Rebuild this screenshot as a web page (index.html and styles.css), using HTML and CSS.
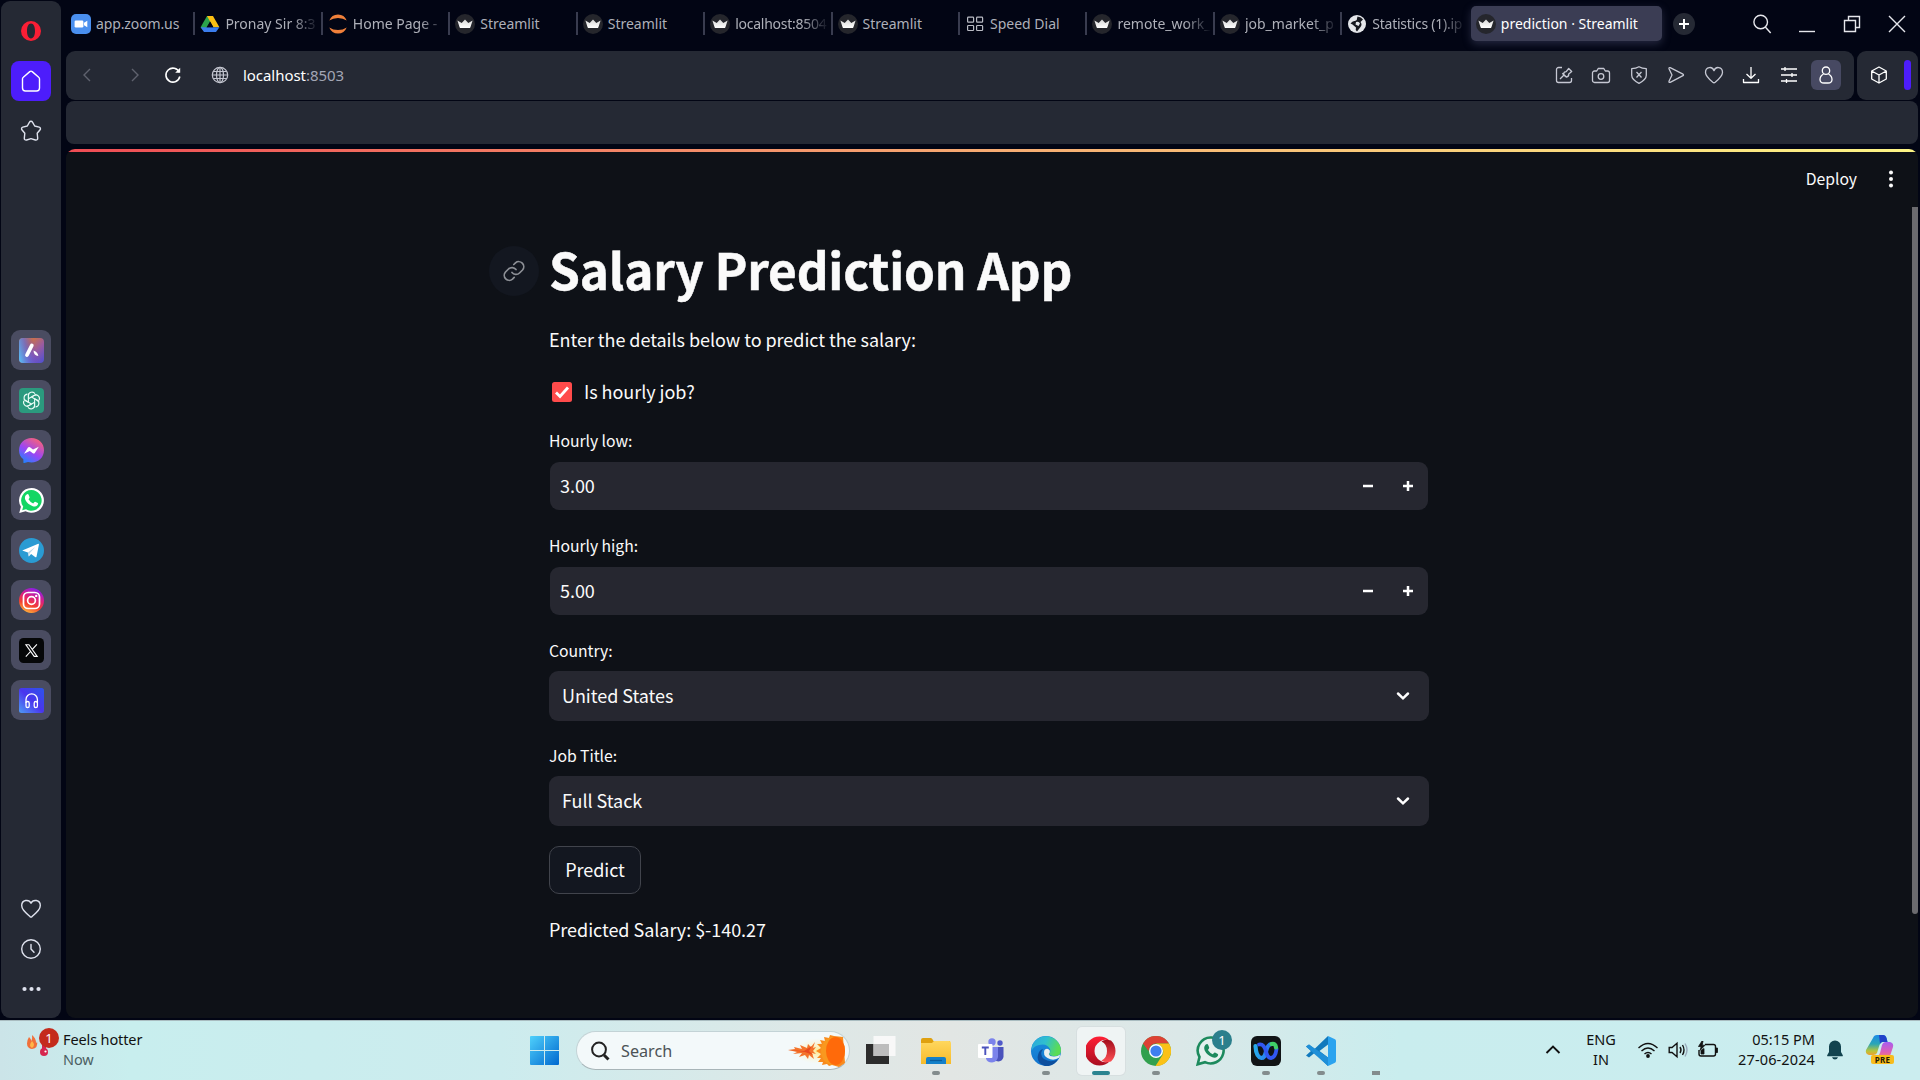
FILE: index.html
```html
<!DOCTYPE html>
<html lang="en">
<head>
<meta charset="utf-8">
<title>prediction · Streamlit</title>
<link rel="stylesheet" href="styles.css">
</head>
<body>
<svg class="defs" width="0" height="0">
  <defs>
    <linearGradient id="gA" x1="0" y1="0" x2="1" y2="1"><stop offset="0" stop-color="#d2874f"/><stop offset=".3" stop-color="#c8704f"/><stop offset=".6" stop-color="#9a5ba0"/><stop offset="1" stop-color="#4b4fd6"/></linearGradient>
    <linearGradient id="gA2" x1="0" y1=".7" x2=".7" y2=".5"><stop offset="0" stop-color="#5cb4ee"/><stop offset=".5" stop-color="#5a6be0" stop-opacity=".7"/><stop offset="1" stop-color="#5a3cd8" stop-opacity="0"/></linearGradient>
    <linearGradient id="gMes" x1=".2" y1="1" x2=".8" y2="0"><stop offset="0" stop-color="#1b86ff"/><stop offset=".45" stop-color="#9b45f5"/><stop offset="1" stop-color="#ff6470"/></linearGradient>
    <linearGradient id="gIns" x1=".2" y1="1" x2=".6" y2="0"><stop offset="0" stop-color="#ffc53d"/><stop offset=".35" stop-color="#f4412f"/><stop offset=".65" stop-color="#dd2080"/><stop offset="1" stop-color="#8a1fe8"/></linearGradient>
    <linearGradient id="gHead" x1="0" y1="1" x2="1" y2="0"><stop offset="0" stop-color="#4f9df5"/><stop offset=".5" stop-color="#4a35ee"/><stop offset="1" stop-color="#2c55ea"/></linearGradient>
    <linearGradient id="gWin" x1="0" y1="0" x2="1" y2="1"><stop offset="0" stop-color="#4fd0fb"/><stop offset="1" stop-color="#0068cf"/></linearGradient>
    <linearGradient id="gFold" x1="0" y1="0" x2="0" y2="1"><stop offset="0" stop-color="#ffd75e"/><stop offset="1" stop-color="#f7bb2a"/></linearGradient>
    <linearGradient id="gEdge" x1="0" y1="0" x2="1" y2=".3"><stop offset="0" stop-color="#2da7dc"/><stop offset=".5" stop-color="#2fbfd0"/><stop offset="1" stop-color="#5bdc55"/></linearGradient>
    <linearGradient id="gEdge2" x1="0" y1="0" x2="0" y2="1"><stop offset="0" stop-color="#1b93dd"/><stop offset="1" stop-color="#1273cf"/></linearGradient>
    <linearGradient id="gOp" x1="0" y1="0" x2="0" y2="1"><stop offset="0" stop-color="#ff1f35"/><stop offset="1" stop-color="#a90e20"/></linearGradient>
    <linearGradient id="gOp2" x1="0" y1="0" x2="0" y2="1"><stop offset="0" stop-color="#a30d1c"/><stop offset="1" stop-color="#ff5155"/></linearGradient>
    <linearGradient id="gCop" x1="0" y1="0" x2="0" y2="1"><stop offset="0" stop-color="#1b8be8"/><stop offset=".45" stop-color="#2ba6b5"/><stop offset=".8" stop-color="#b8c63a"/><stop offset="1" stop-color="#f0a030"/></linearGradient>
    <linearGradient id="gCop2" x1="0" y1="0" x2="0" y2="1"><stop offset="0" stop-color="#a75df0"/><stop offset=".6" stop-color="#e05fb4"/><stop offset="1" stop-color="#f58a5c"/></linearGradient>
    <linearGradient id="gWb" x1="0" y1="0" x2="1" y2="0"><stop offset="0" stop-color="#27a9ea"/><stop offset="1" stop-color="#2a6cf5"/></linearGradient>
    <radialGradient id="gGlow"><stop offset="0" stop-color="#ffe98a"/><stop offset="1" stop-color="#fff6cf" stop-opacity="0"/></radialGradient>
    <linearGradient id="gCrown" x1="0" y1="0" x2="0" y2="1"><stop offset="0" stop-color="#d8d8d8"/><stop offset="1" stop-color="#fff"/></linearGradient>
    <symbol id="crown" viewBox="0 0 20 20"><circle cx="10" cy="10" r="10" fill="#25262c"/><path d="M2.400 6.600l4.300 2.300L10 5.400l3.300 3.500 4.300-2.300-2.200 6.600q-.3.900-1.200.9H5.800q-.9 0-1.200-.9z" fill="url(#gCrown)"/></symbol>
  </defs>
</svg>

<div class="browser">
  <aside class="side">
    <svg class="opera-menu" width="22" height="22" viewBox="0 0 22 22"><path fill="#fa1e35" fill-rule="evenodd" d="M11 1a10 10 0 0 0 0 20 10 10 0 0 0 0-20zM11 3.600c2.700 0 4 3.400 4 7.400s-1.300 7.400-4 7.400-4-3.400-4-7.400 1.300-7.400 4-7.400z"/></svg>
    <span class="home"><svg width="24" height="24" viewBox="0 0 24 24" class="ln"><path d="M3.500 9.800a2 2 0 0 1 .8-1.600L10.800 2.600a2 2 0 0 1 2.400 0l6.500 5.600a2 2 0 0 1 .8 1.600V19a3 3 0 0 1-3 3h-11a3 3 0 0 1-3-3z"/></svg></span>
    <svg class="star ln" width="24" height="24" viewBox="0 0 24 24"><path d="M10.500 3.200a1.700 1.700 0 0 1 3 0l2.200 3.800 4.500 1.100a1.700 1.700 0 0 1 .9 2.700l-2.900 3.500.5 5a1.700 1.700 0 0 1-2.300 1.700L12 19.600l-4.400 1.400a1.700 1.700 0 0 1-2.300-1.700l.5-5-2.900-3.500a1.700 1.700 0 0 1 .9-2.700L8.300 7z"/></svg>
    <div class="apps">
      <span class="app"><svg width="25" height="25" viewBox="0 0 25 25"><rect width="25" height="25" rx="4" fill="url(#gA)"/><rect width="25" height="25" rx="4" fill="url(#gA2)"/><path d="M12.800 7.500L8 17" stroke="#fff" stroke-width="3.800" stroke-linecap="round"/><path d="M14.500 12.500q4.500 1.500 4.800 5.500-4.500-.3-4.800-5.500z" fill="#fff"/></svg></span>
      <span class="app"><svg width="25" height="25" viewBox="0 0 25 25"><rect width="25" height="25" rx="4" fill="#2b9a7e"/><g fill="none" stroke="#e9fbf5" stroke-width="1.100"><g id="pt"><path d="M9.400 14.300V7.800a3.600 3.600 0 0 1 6.600-2M12.500 9l3.200-1.900a3.600 3.600 0 0 1 1.600-.5"/></g><use href="#pt" transform="rotate(60 12.500 12.500)"/><use href="#pt" transform="rotate(120 12.500 12.500)"/><use href="#pt" transform="rotate(180 12.500 12.500)"/><use href="#pt" transform="rotate(240 12.500 12.500)"/><use href="#pt" transform="rotate(300 12.500 12.500)"/></g></svg></span>
      <span class="app"><svg width="25" height="25" viewBox="0 0 25 25"><path d="M12.500 0C19.500 0 25 5.200 25 12.200s-5.500 12.200-12.500 12.200c-1.200 0-2.400-.2-3.500-.5L4.500 25.200 4.300 21.300C1.500 19.100 0 16 0 12.200 0 5.200 5.500 0 12.500 0z" fill="url(#gMes)"/><path d="M5 15.800l4-6.200q.8-1 2-.3l3 2.200 5.800-2.700-4 6.200q-.8 1-2 .3l-3-2.200z" fill="#fff"/></svg></span>
      <span class="app"><svg width="25" height="25" viewBox="0 0 25 25"><path d="M12.500 0A12.400 12.400 0 1 1 6.600 23.300L.2 25l1.700-6.200A12.400 12.400 0 0 1 12.500 0z" fill="#fff"/><path d="M12.500 2.100A10.300 10.300 0 1 1 7 21.200L3.200 22.200l1-3.700A10.300 10.300 0 0 1 12.500 2.100z" fill="#12d664"/><path d="M7.300 6.800q1.800-1.500 2.400.2l.9 2.200q.2.700-1.100 2 1.700 3 4.700 4.200 1.400-2 2-1.700l2.600 1.300q.9.600-.4 2.300-1.800 1.900-4.600.9-5.300-1.900-7.400-6.200-1.300-3.200.9-5.200z" fill="#fff"/></svg></span>
      <span class="app"><svg width="25" height="25" viewBox="0 0 25 25"><circle cx="12.500" cy="12.500" r="12.500" fill="#2a9bd3"/><path d="M3.200 12.400L19.300 5.700q.8-.1.600 1l-2.400 12q-.4 1-1.400.4l-4-3-2.300 2.300-.9-4z" fill="#fff"/><path d="M8.900 14.400l7.400-5.400-5.600 6.300-.9 3.100z" fill="#b9d7e8"/></svg></span>
      <span class="app"><svg width="25" height="25" viewBox="0 0 25 25"><circle cx="12.500" cy="12.500" r="12.500" fill="url(#gIns)"/><g fill="none" stroke="#fff" stroke-width="1.700"><rect x="4.500" y="4.500" width="16" height="16" rx="4.600"/><circle cx="12.500" cy="12.500" r="3.900"/></g><circle cx="17.200" cy="7.900" r="1.200" fill="#fff"/></svg></span>
      <span class="app"><svg width="25" height="25" viewBox="0 0 25 25"><rect width="25" height="25" rx="4.500" fill="#060708"/><path d="M6.900 6.700h3l8.300 11.700h-3zM17.900 6.300l-4.800 5.400M11.500 13.500l-4.700 5.200" fill="none" stroke="#fff" stroke-width="1.100"/></svg></span>
      <span class="app"><svg width="25" height="25" viewBox="0 0 25 25"><rect width="25" height="25" rx="2.500" fill="url(#gHead)"/><g fill="none" stroke="#fff" stroke-width="1.300"><path d="M7 15v-3.500a5.500 5.500 0 0 1 11.400 0V15"/><rect x="7" y="13.500" width="3.200" height="6" rx="1.600"/><rect x="15.200" y="13.500" width="3.200" height="6" rx="1.600"/></g></svg></span>
    </div>
    <div class="side-foot">
      <svg width="24" height="24" viewBox="0 0 24 24" class="ln"><path d="M12 6.200C10 2 2.700 2.500 2.700 8.600c0 3.200 2.300 5.400 8.300 11q1 .8 2 0c6-5.600 8.300-7.800 8.300-11C21.300 2.500 14 2 12 6.200z"/></svg>
      <svg width="24" height="24" viewBox="0 0 24 24" class="ln"><circle cx="12" cy="12" r="9.300"/><path d="M12 7.500V12l3 3.300"/></svg>
      <svg width="24" height="24" viewBox="0 0 24 24" fill="#dfe2ee"><circle cx="5.500" cy="12" r="2.100"/><circle cx="12.500" cy="12" r="2.100"/><circle cx="19.500" cy="12" r="2.100"/></svg>
    </div>
  </aside>

  <div class="main">
    <header class="tabs">
      <div class="tab first"><svg width="20" height="20" viewBox="0 0 20 20"><rect width="20" height="20" rx="5" fill="#4a8fee"/><rect x="3.600" y="6.500" width="8.800" height="7" rx="1.300" fill="#fff"/><path d="M13 8.700l3.300-2v6.600l-3.300-2z" fill="#fff"/></svg><span class="tt">app.zoom.us</span></div>
      <div class="tab"><svg width="20" height="20" viewBox="0 0 20 20"><path d="M.6 13.200L7 2h3.200l2 3.500L4 17z" fill="#2ba24c"/><path d="M7 2h6l6.400 11.200h-6z" fill="#fbbf12"/><path d="M4 18l-3.400-4.800h18.800L16 18z" fill="#3b7ded"/><path d="M6.700 13.200L10 7.500l3.300 5.700z" fill="#020514"/></svg><span class="tt fade">Pronay Sir 8:3</span></div>
      <div class="tab"><svg width="20" height="20" viewBox="0 0 20 20"><path d="M1.300 6.500a9.300 9.300 0 0 1 17.400 0Q15 4 10 4t-8.700 2.500zM1.300 13.500a9.300 9.300 0 0 0 17.400 0Q15 16 10 16t-8.700-2.500z" fill="#f0803a"/></svg><span class="tt fade">Home Page -</span></div>
      <div class="tab"><svg width="20" height="20"><use href="#crown"/></svg><span class="tt">Streamlit</span></div>
      <div class="tab"><svg width="20" height="20"><use href="#crown"/></svg><span class="tt">Streamlit</span></div>
      <div class="tab"><svg width="20" height="20"><use href="#crown"/></svg><span class="tt fade tight">localhost:8504</span></div>
      <div class="tab"><svg width="20" height="20"><use href="#crown"/></svg><span class="tt">Streamlit</span></div>
      <div class="tab"><svg width="20" height="20" viewBox="0 0 20 20" fill="none" stroke="#b9bbc3" stroke-width="1.200"><rect x="2.600" y="3.200" width="6" height="5" rx=".8"/><rect x="11.600" y="3.200" width="6" height="5" rx=".8"/><rect x="2.600" y="11.500" width="6" height="5" rx=".8"/><rect x="11.600" y="11.500" width="6" height="5" rx=".8"/></svg><span class="tt">Speed Dial</span></div>
      <div class="tab"><svg width="20" height="20"><use href="#crown"/></svg><span class="tt fade">remote_work_</span></div>
      <div class="tab"><svg width="20" height="20"><use href="#crown"/></svg><span class="tt fade">job_market_p</span></div>
      <div class="tab"><svg width="20" height="20" viewBox="0 0 20 20"><circle cx="10" cy="10" r="9" fill="#e4e6ea"/><path d="M10.500 2.500q4 .5 5.500 3l-2.500 2.500q2 2.500 0 5l-3.500 4.500q-2-1.500-1-4l-3.500-3-2-1q2-3 4.500-2.500 2.500-1 2-2.500z" fill="#16181f"/><path d="M9 8q3-1 4 1.500l-1.500 2.500-3-1.500z" fill="#e4e6ea"/></svg><span class="tt fade tight">Statistics (1).ip</span></div>
      <div class="tab active"><svg width="20" height="20"><use href="#crown"/></svg><span class="tt">prediction · Streamlit</span></div>
      <span class="newtab"><svg width="12" height="12" viewBox="0 0 12 12"><path d="M6 1v10M1 6h10" stroke="#fff" stroke-width="2"/></svg></span>
      <div class="winctl">
        <svg width="20" height="20" viewBox="0 0 20 20"><circle cx="8.700" cy="8" r="6.800"/><path d="M13.300 13l5.400 6"/></svg>
        <svg width="20" height="20" viewBox="0 0 20 20"><path d="M2 17.500h16"/></svg>
        <svg width="20" height="20" viewBox="0 0 20 20"><path d="M2.500 6.500h11v11h-11zM6.500 6.500v-4h11v11h-4"/></svg>
        <svg width="20" height="20" viewBox="0 0 20 20"><path d="M2 2l16 16M18 2L2 18"/></svg>
      </div>
    </header>

    <div class="address">
      <div class="bar">
        <svg class="nav dim" width="20" height="20" viewBox="0 0 20 20"><path d="M13 4l-6 6 6 6"/></svg>
        <svg class="nav dim" width="20" height="20" viewBox="0 0 20 20"><path d="M7 4l6 6-6 6"/></svg>
        <svg class="nav reload" width="20" height="20" viewBox="0 0 20 20"><path d="M16.300 7.200a7 7 0 1 0 .5 4.300"/><path d="M17.200 2.800v5h-5z" fill="#fff" stroke="none"/></svg>
        <svg class="nav globe" width="20" height="20" viewBox="0 0 20 20"><circle cx="10" cy="10" r="7.700"/><ellipse cx="10" cy="10" rx="3.500" ry="7.700"/><path d="M10 2.300v15.400M3.200 6.500h13.600M3.200 13.500h13.600M2.300 10h15.400"/></svg>
        <span class="url"><b>localhost</b>:8503</span>
        <div class="tools">
          <svg width="20" height="20" viewBox="0 0 20 20"><path d="M8 2.500H4.500a2 2 0 0 0-2 2v11a2 2 0 0 0 2 2h11a2 2 0 0 0 2-2V13M6 14l4-4M8.300 8.300l3.400 3.500M9.500 9.300c.3-2 1-2.600 2.700-2.600l2.500-3.200 3 3-3 2.500c.3 2-.7 2.700-2.300 3z"/></svg>
          <svg width="20" height="20" viewBox="0 0 20 20"><path d="M3.500 6h2.200l1.500-2.500h5.600L14.300 6h2.200A2 2 0 0 1 18.500 8v7.500a2 2 0 0 1-2 2h-13a2 2 0 0 1-2-2V8a2 2 0 0 1 2-2z"/><circle cx="10" cy="11.500" r="2.800"/></svg>
          <svg width="20" height="20" viewBox="0 0 20 20"><path d="M10 1.700Q13 3.500 17.300 3.700v6.600c0 4-3.300 6-7.300 8-4-2-7.300-4-7.300-8V3.700Q7 3.500 10 1.700zM7.500 7l5 5.500M12.500 7l-5 5.500"/></svg>
          <svg width="20" height="20" viewBox="0 0 20 20"><path d="M3 3.700q-.3-1.500 1.200-1L17 9.200q1 .8 0 1.500L4.200 17.300q-1.500.5-1.200-1L6 10z"/></svg>
          <svg width="20" height="20" viewBox="0 0 20 20"><path d="M10 5.700C8.500 1 1.500 1.500 1.500 7.500c0 3.500 4 7 7.300 9.800q1.200.9 2.400 0c3.300-2.800 7.300-6.300 7.300-9.800C18.500 1.500 11.500 1 10 5.700z"/></svg>
          <svg width="20" height="20" viewBox="0 0 20 20"><path d="M10 2v11M5.500 9l4.500 4.300L14.500 9M2.500 14v3.500h15V14" stroke="#fff"/></svg>
          <svg width="20" height="20" viewBox="0 0 20 20"><path d="M2 4h16M2 10h16M2 16h16M6 2v4M13 8v4M7.500 14v4" stroke="#fff"/></svg>
          <span class="user"><svg width="20" height="20" viewBox="0 0 20 20"><circle cx="10" cy="5.700" r="3.700" stroke="#fff"/><path d="M7.500 9q-3.500 2-3.500 5.500 0 3.500 4 3.500h4q4 0 4-3.500 0-3.500-3.500-5.500" stroke="#fff"/></svg></span>
        </div>
      </div>
      <div class="ext"><svg width="20" height="20" viewBox="0 0 20 20"><path d="M10 2l7.300 4v8L10 18l-7.300-4V6zM2.700 6L10 10l7.300-4M10 10v8"/></svg><i></i></div>
    </div>

    <div class="bookmarks"></div>

    <div class="page">
      <div class="decor"></div>
      <div class="toolbar">Deploy<svg width="6" height="20" viewBox="0 0 6 20" fill="#fafafa"><circle cx="3" cy="3.400" r="2"/><circle cx="3" cy="10" r="2"/><circle cx="3" cy="16.600" r="2"/></svg></div>
      <div class="scroll"></div>
      <main class="form">
        <h1><span class="anchor"><svg width="24" height="24" viewBox="0 0 24 24"><path d="M10 13.500a5 5 0 0 0 7.500.5l3-3a5 5 0 0 0-7-7.100L11.800 5.500M14 10.500a5 5 0 0 0-7.500-.5l-3 3a5 5 0 0 0 7 7.100l1.700-1.700"/></svg></span>Salary Prediction App</h1>
        <p>Enter the details below to predict the salary:</p>
        <div class="check"><span class="box"><svg width="16" height="16" viewBox="0 0 16 16"><path d="M2 8.500l4 4L14 3.500" fill="none" stroke="#fff" stroke-width="2.800"/></svg></span><span class="tx">Is hourly job?</span></div>
        <label>Hourly low:</label>
        <div class="num"><span class="tx">3.00</span><svg width="50" height="10" viewBox="0 0 50 10"><path d="M0 5h10M40 5h10M45 0v10"/></svg></div>
        <label class="l2">Hourly high:</label>
        <div class="num"><span class="tx">5.00</span><svg width="50" height="10" viewBox="0 0 50 10"><path d="M0 5h10M40 5h10M45 0v10"/></svg></div>
        <label class="l3">Country:</label>
        <div class="select"><span class="tx">United States</span><svg width="14" height="10" viewBox="0 0 14 10"><path d="M2 2.500l5 4.800 5-4.800"/></svg></div>
        <label class="l4">Job Title:</label>
        <div class="select"><span class="tx">Full Stack</span><svg width="14" height="10" viewBox="0 0 14 10"><path d="M2 2.500l5 4.800 5-4.800"/></svg></div>
        <button>Predict</button>
        <p class="result">Predicted Salary: $-140.27</p>
      </main>
    </div>
  </div>
</div>

<footer class="taskbar">
  <div class="weather">
    <svg width="34" height="40" viewBox="0 0 34 40"><path d="M6 16q2 2 2.500 4Q9.500 17 9 14q4 3 4 8 1 0 1-2 1.500 7-5 8-5-.6-5-5.500Q4 19 6 16z" fill="#f0703a"/><path d="M9 20q4 4 0 7-4-2 0-7z" fill="#ffb648"/><rect x="19" y="12" width="4" height="18" rx="2" fill="#d6264e"/><circle cx="21" cy="31" r="4" fill="#d6264e"/><circle cx="22.500" cy="30.500" r="1.100" fill="#fff"/></svg>
    <span class="badge red">1</span>
    <div class="two left"><span>Feels hotter</span><em>Now</em></div>
  </div>
  <div class="dock">
    <svg class="start" width="29" height="29" viewBox="0 0 29 29"><path d="M0 1q0-1 1-1h13v14H0zM15 0h13q1 0 1 1v13H15zM0 15h14v14H1q-1 0-1-1zM15 15h14v13q0 1-1 1H15z" fill="url(#gWin)"/></svg>
    <div class="search"><svg width="20" height="20" viewBox="0 0 20 20"><circle cx="9" cy="8.500" r="6.900"/><path d="M14 14l4.500 4.500" stroke-width="3"/></svg>Search
      <svg class="fire" width="62" height="36" viewBox="0 0 62 36"><ellipse cx="32" cy="18" rx="24" ry="13" fill="url(#gGlow)"/><path d="M2 17l7-1-1-2 8 2-2-4 7 3 1-4 3 3 4-5-2 6 3-1-3 4 3 3-4-1 2 6-5-4-1 4-3-4-6 2 3-4-9 1 4-2z" fill="#f4732a"/><path d="M2 17l16 1 8-5-3 5 4 4-8-3z" fill="#e84a1e"/><path d="M32 10l4 1-2-4 5 1-1-4 5 1 1-3 4 1 9 1 2 26-6 4-7-2-3 1-2-2-5 1 1-3-5 0 3-4-4 0 4-4-5-3 5-3-4-4 6 0z" fill="#f98a1d"/><ellipse cx="47" cy="18" rx="12" ry="14" fill="#f9981f"/><ellipse cx="49.500" cy="18" rx="9.500" ry="14" fill="#ff6a0a"/></svg></div>
    <span class="task"><svg width="30" height="30" viewBox="0 0 30 30"><path d="M0 8h23v20H0z" fill="#2c2c2c"/><path d="M7.500 0h22v20h-22z" fill="#fafafa" fill-opacity=".92"/><path d="M7.500 8H23v12H7.500z" fill="#bdbdbd"/></svg></span>
    <span class="task run"><svg width="30" height="30" viewBox="0 0 30 30"><path d="M0 4q0-2 2-2h8q1 0 2.500 3H29v6H0z" fill="#dfa00f"/><path d="M0 7h11l2-2h15q2 0 2 2v21H0z" fill="url(#gFold)"/><path d="M5 28v-5q0-2 2-2h16q2 0 2 2v5z" fill="#1580c9"/><path d="M9 24.500h12" stroke="#0b5c9c" stroke-width="1.300"/></svg></span>
    <span class="task"><svg width="30" height="30" viewBox="0 0 30 30"><circle cx="16" cy="6" r="3.700" fill="#7b83eb"/><circle cx="24" cy="7" r="2.700" fill="#5059c9"/><path d="M20 11h7.500v10q-1 4-5 4.500-3 0-4-2z" fill="#4b53bc"/><path d="M10 11h12v10q-1 5-6 5.500-5 0-6-4z" fill="#7b83eb"/><rect x="2" y="8" width="14.500" height="14" rx="1" fill="#fff"/><path d="M5.800 11.500h7M9.300 11.500V19" stroke="#4b53bc" stroke-width="1.900"/></svg></span>
    <span class="task run"><svg width="30" height="30" viewBox="0 0 30 30"><circle cx="15" cy="15" r="15" fill="url(#gEdge2)"/><path d="M1 10A15 15 0 0 1 30 14q0 6-6 6-5 0-6-2 2-2 1-5-3-6-11-4-5 1-7 5z" fill="url(#gEdge)"/><path d="M12 13q-4 6 1 10 6 4 14 .5Q22 31 14 30 5 27 7 19q1-5 5-6z" fill="#0d4f9e"/><path d="M13.500 14q3-2.500 5.300.5.500 2-1 3.500.5 2.500 5.200 2.500 4 0 6-2l-.5 3q-6 4-12 .5-5-3-3-8z" fill="#e8f0f0"/></svg></span>
    <span class="task run cur"><svg width="30" height="30" viewBox="0 0 30 30"><path d="M15 .5A14.500 14.500 0 1 0 15 29.500q6 0 10-4-6 2-9.500-1Q10 21 10 15t5.500-9.500Q19 2.500 25 4.500 21 .5 15 .5z" fill="url(#gOp)" transform="translate(-1.500 0)"/><path d="M25 4.500A14.500 14.500 0 0 1 25 25.500q-6 2-9.500-1Q21 22 21 15t-5.500-9.500Q19 2.500 25 4.500z" fill="url(#gOp2)"/></svg></span>
    <span class="task run"><svg width="30" height="30" viewBox="0 0 30 30"><circle cx="15" cy="15" r="15" fill="#31a04e"/><path d="M2 7.500A15 15 0 0 1 28 7.500H15q-6 0-7.500 7.500z" fill="#dd4234"/><path d="M15 7.500h13A15 15 0 0 1 14.500 30l7-11q2-5-1.500-9z" fill="#fbc116"/><circle cx="15" cy="15" r="7" fill="#fff"/><circle cx="15" cy="15" r="5.600" fill="#3f7fee"/></svg></span>
    <span class="task"><svg width="30" height="30" viewBox="0 0 30 30"><path d="M15.500 1.500a13 13 0 1 1-6.500 24.700L1.700 28.300 3.500 21A13 13 0 0 1 15.500 1.500z" fill="#e5f1ee" stroke="#1d8a5d" stroke-width="2.600"/><path d="M9.500 8.800q2-1.500 2.700.3l1 2.500q.2.700-1.300 2.300 2 3 4.900 4.300 1.500-2 2.200-1.700l2.800 1.400q1 .6-.4 2.500-2 2-5 .9-5.500-2-7.700-6.700-1.300-3.600.8-5.800z" fill="#1d8a5d"/></svg><span class="badge teal">1</span></span>
    <span class="task run"><svg width="30" height="30" viewBox="0 0 30 30"><rect width="30" height="30" rx="6" fill="#111416"/><path d="M20.500 8q-4 .5-5.500 7.500-1.200 6.500-4.500 6.500Q5 21 4.500 10" fill="none" stroke="url(#gWb)" stroke-width="4.200" stroke-linecap="round"/><path d="M8 8.500q5-1 7 7 1.500 6.500 5 6.500 4.500-.5 5.500-9" fill="none" stroke="#3157f2" stroke-width="3.800" stroke-linecap="round"/><path d="M20.500 8q4-1 4.500 3.500" fill="none" stroke="#3fcf68" stroke-width="4.200" stroke-linecap="round"/></svg></span>
    <span class="task run"><svg width="30" height="30" viewBox="0 0 30 30"><path d="M22 0L8.500 13 3 8.500 0 10.500 5 15 0 19.500 3 21.500 8.500 17 22 30V21.500L13.500 15 22 8.500z" fill="#1079bd"/><path d="M22 0l6.500 3q1.500.7 1.500 2v20q0 1.300-1.500 2L22 30z" fill="#2ba3ef"/><path d="M0 10.500l3-2L22 21.500V30z" fill="#1f8fd8"/></svg></span>
    <span class="task run sq"></span>
  </div>
  <div class="tray">
    <svg class="up" width="16" height="16" viewBox="0 0 16 16"><path d="M1.500 11L8 4.500 14.500 11"/></svg>
    <div class="two mid"><span>ENG</span><span>IN</span></div>
    <svg class="wifi" width="22" height="18" viewBox="0 0 22 18"><path d="M1.500 7q9.500-9 19 0M4.500 10q6.500-6 13 0M7.500 13q3.500-3.200 7 0"/><circle cx="11" cy="15" r="1.900" fill="#111" stroke="none"/></svg>
    <svg class="vol" width="20" height="18" viewBox="0 0 20 18"><path d="M1.200 6.500H4l5-4.300v13.600l-5-4.300H1.200zM12 6q2 3 0 6M14.500 4q3 5 0 10"/><path d="M17 2.500q4 6.500 0 13" stroke="#9ab"/></svg>
    <svg class="bat" width="22" height="18" viewBox="0 0 22 18"><path d="M8 3.500h8.500a2 2 0 0 1 2 2v7.500a2 2 0 0 1-2 2H4a2 2 0 0 1-2-2V9"/><path d="M19 7h1.500v4.500H19zM5 0L1.500 5.500h2.700L3 9.500l5-5.300H5.200L6 0zM4 13V9.500l3-2V13z" fill="#111" stroke="#111" stroke-width=".8"/></svg>
    <div class="two right"><span>05:15 PM</span><span class="date">27-06-2024</span></div>
    <svg class="bell" width="16" height="20" viewBox="0 0 16 20"><path d="M8 .5a6 6 0 0 1 6 6V12l1.800 3.300q.3 1-.8 1H1q-1.100 0-.8-1L2 12V6.500a6 6 0 0 1 6-6zM5 17.200h6q-.8 2.200-3 2.200t-3-2.200z"/></svg>
    <span class="copilot"><svg width="30" height="28" viewBox="0 0 30 28"><path d="M8 3q1-3 4-3h6q2.500 0 3.500 3l1 4h-5q-2 0-3 3l-2.500 8q-1 2-4 2H4q-4-1-3-5z" fill="url(#gCop)"/><path d="M14 0h4q2.500 0 3.500 3l1 4h-5q-1.500 0-2.500 2z" fill="#2142c9"/><path d="M17 10q1-3 4-3h4q4 1 3 5l-3 9q-1 3-4 3h-6q-3 0-3-3 2 0 3-3z" fill="url(#gCop2)"/></svg><b>PRE</b></span>
  </div>
</footer>
</body>
</html>
```
FILE: styles.css
```css
* { box-sizing: border-box; }
body {
  margin: 0;
  width: 1920px;
  height: 1080px;
  overflow: hidden;
  background: #020514;
  font-family: "Noto Sans", "Open Sans", sans-serif;
}
svg { flex: none; display: block; }
.defs { position: absolute; }
.ln { fill: none; stroke: #dfe2ee; stroke-width: 1.4; stroke-linejoin: round; stroke-linecap: round; }

.browser { display: flex; height: 1020px; padding: 1px 2px 2px 1px; gap: 5px; }

/* sidebar */
.side {
  width: 60px;
  background: #252934;
  border-radius: 9px;
  display: flex;
  flex-direction: column;
  align-items: center;
}
.opera-menu { margin-top: 19px; }
.home {
  width: 40px; height: 40px; margin-top: 19px;
  border-radius: 8px; background: #4d1dfb;
  display: flex; align-items: center; justify-content: center;
}
.home .ln { stroke: #fff; }
.star { margin-top: 18px; margin-right: 1px; }
.apps { margin-top: 187px; display: flex; flex-direction: column; gap: 10px; }
.app {
  width: 40px; height: 40px; border-radius: 9px; background: #4a4c61;
  display: flex; align-items: center; justify-content: center;
}
.side-foot { margin-top: auto; margin-bottom: 17px; margin-right: 1px; display: flex; flex-direction: column; gap: 16px; }

.main { flex: 1; min-width: 0; display: flex; flex-direction: column; }

/* tab strip */
.tabs { height: 50px; display: flex; padding-top: 5px; }
.tab {
  width: 127.45px; height: 35px; padding-left: 6px; flex: none;
  display: flex; align-items: center; gap: 5px;
  color: #aeb0b9; font-size: 14px; position: relative;
}
.tab.first { width: 128.4px; padding-left: 5px; letter-spacing: -.12px; }
.tab:not(.first):not(.active)::before {
  content: ""; position: absolute; left: -1px; top: 6px; width: 2px; height: 23px; background: #393c4f;
}
.tt { flex: 1; white-space: nowrap; line-height: 24px; margin-right: 3px; }
.tt.tight { letter-spacing: -.25px; }
.tt.fade { -webkit-mask-image: linear-gradient(90deg, #000 72%, transparent 100%); mask-image: linear-gradient(90deg, #000 72%, transparent 100%); }
.tab.active {
  width: 191px; margin-left: 2px; padding-left: 5px; background: #3b3d54; color: #fff; border-radius: 5px;
  box-shadow: 0 3px 8px rgba(90, 92, 130, .4);
}
.newtab {
  width: 22px; height: 22px; border-radius: 50%; background: #252934;
  margin: 7px 0 0 11px; display: flex; align-items: center; justify-content: center;
}
.winctl { margin-left: auto; margin-right: 11px; padding-top: 8px; display: flex; gap: 25px; }
.winctl svg { fill: none; stroke: #e6e7ec; stroke-width: 1.4; }

/* address row */
.address { display: flex; gap: 3px; height: 49px; }
.bar { flex: 1; background: #252934; border-radius: 9px; display: flex; align-items: center; padding: 0 13px 1px 11px; }
.nav { fill: none; stroke: #fff; stroke-width: 1.6; }
.nav.dim { stroke: #5f626e; stroke-width: 1.4; margin-right: 28px; }
.nav.reload { margin-left: -10px; margin-right: 28px; }
.nav.globe { stroke: #c3c5cf; stroke-width: 1.2; margin-left: -1px; }
.url { margin-left: 13px; font-size: 15px; line-height: 24px; letter-spacing: -.05px; color: #a3a6b5; }
.url b { font-weight: 400; color: #fff; }
.tools { margin-left: auto; display: flex; align-items: center; gap: 17.5px; }
.tools svg, .ext svg { fill: none; stroke: #c6c8d3; stroke-width: 1.3; stroke-linejoin: round; }
.user {
  width: 30px; height: 30px; border-radius: 6px; background: #474962; margin-left: -5px;
  display: flex; align-items: center; justify-content: center;
}
.ext { width: 61px; background: #252934; border-radius: 9px; display: flex; align-items: center; padding: 0 0 1px 12px; }
.ext svg { stroke: #fff; }
.ext i { width: 7px; height: 30px; border-radius: 3.5px; background: #4d1dfb; margin-left: 15px; }

.bookmarks { height: 43px; margin-top: 1px; background: #252934; border-radius: 8px; }

/* app page */
.page {
  flex: 1; margin-top: 5px; position: relative; overflow: hidden;
  background: #0e1117; border-radius: 9px; color: #fafafa;
  font-family: "Noto Sans CJK JP", "Noto Sans", sans-serif; font-size: 18px; letter-spacing: -.045px;
}
.decor { height: 3px; background: linear-gradient(90deg, #ee4c54, #f6ab72 50%, #fdf585); }
.toolbar {
  position: absolute; right: 24px; top: 17px; height: 26px; line-height: 24px;
  display: flex; align-items: center; gap: 31px; font-size: 15.75px;
}
.scroll { position: absolute; right: 0; top: 58px; width: 6px; height: 707px; background: #6b6b6f; border-radius: 0 0 3px 3px; }
.form { width: 880px; margin-left: 483px; padding-top: 87px; display: flex; flex-direction: column; }
.form h1 {
  margin: 0; height: 60px; line-height: 60px; font-size: 49.5px; font-weight: 700; letter-spacing: -.2px;
  -webkit-text-stroke: .5px #fafafa; position: relative; white-space: nowrap;
}
.anchor {
  position: absolute; left: -60px; top: 7px; width: 50px; height: 50px; border-radius: 50%; background: #131720;
  display: flex; align-items: center; justify-content: center;
}
.anchor svg { fill: none; stroke: #8d9096; stroke-width: 1.7; stroke-linecap: round; }
.form p { margin: 25px 0 0; line-height: 30px; }
.check { margin-top: 23px; height: 30px; display: flex; align-items: center; padding-left: 3px; gap: 12px; }
.tx { line-height: 28px; padding-bottom: 2px; }
.box { width: 20px; height: 20px; border-radius: 2.5px; background: #ff4b4b; display: flex; align-items: center; justify-content: center; }
.form label { margin-top: 23px; height: 22px; line-height: 22px; font-size: 15.75px; }
.num, .select { background: #262730; border-radius: 9px; display: flex; align-items: center; justify-content: space-between; }
.num { height: 48px; margin: 10px 1px 0; padding: 0 15px 0 10px; }
.num svg { stroke: #fff; stroke-width: 2.5; }
.select { height: 50px; margin-top: 9px; padding: 0 19px 0 13px; }
.select svg { fill: none; stroke: #fff; stroke-width: 2.5; stroke-linecap: round; }
.form label.l2 { margin-top: 25px; }
.form label.l3 { margin-top: 25px; }
.form label.l4 { margin-top: 24px; }
.form button {
  width: 92px; height: 48px; margin: 20px 0 0; padding: 0 0 2px; border: 1px solid #41444c; border-radius: 10px;
  background: #131720; color: #fafafa; font: inherit; letter-spacing: inherit;
}
.form p.result { margin-top: 20px; }

/* taskbar */
.taskbar {
  height: 60px; border-top: 1px solid #a9bcc0; display: flex; position: relative; color: #111;
  background: linear-gradient(90deg, #cbe4e8 0, #c8eeee 130px, #ccecee 500px, #dde8e7 800px, #e2e6e4 950px, #dbe8e8 1180px, #c9edee 1400px, #cbedef 1920px);
  font-size: 14.5px;
}
.weather { width: 530px; display: flex; position: relative; padding-left: 23px; letter-spacing: -.12px; }
.badge {
  position: absolute; width: 20px; height: 20px; border-radius: 50%; color: #fff;
  font-size: 13px; line-height: 20px; text-align: center;
}
.badge.red { left: 39px; top: 7px; background: #c42b1c; }
.badge.teal { left: 25px; top: 3px; background: #2b7f8c; }
.two { display: flex; flex-direction: column; padding-top: 8px; line-height: 20px; white-space: nowrap; }
.two em { font-style: normal; color: #4c6063; }
.left { margin-left: 6px; }
.mid { text-align: center; width: 34px; margin-left: 23px; }
.right { text-align: right; margin-left: auto; }
.date { letter-spacing: .12px; }

.dock { display: flex; align-items: center; }
.search {
  width: 274px; height: 39px; border-radius: 20px; margin: 0 9px 0 17px; padding-left: 13px;
  background: #f3f9fa; border: 1px solid #c3d3d6; border-bottom-color: #a8b5b8;
  display: flex; align-items: center; color: #4c5356; font-size: 16.2px;
}
.search > svg:first-child { fill: none; stroke: #222; stroke-width: 2; margin-right: 11px; }
.search .fire { margin-left: auto; margin-right: 1px; }
.task { width: 48px; height: 48px; margin-right: 7px; border-radius: 5px; display: flex; align-items: center; justify-content: center; position: relative; }
.dock .task:nth-child(3) { margin-left: -2px; }
.run::after { content: ""; position: absolute; left: 20px; bottom: 0; width: 8px; height: 4px; border-radius: 2px; background: #838c8d; }
.cur { background: #eff4f4; box-shadow: 0 0 0 1px #d7dfe0; }
.cur::after { left: 15px; width: 18px; background: #2b8390; }
.sq::after { border-radius: 0; }

.tray { position: absolute; left: 1545px; right: 25px; top: 0; height: 58px; display: flex; align-items: center; }
.tray .two { align-self: flex-start; }
.tray svg { fill: none; stroke: #111; stroke-width: 1.4; }
.tray .up { stroke-width: 1.9; }
.wifi { margin-left: 19px; }
.vol { margin-left: 9px; }
.bat { margin-left: 9px; }
.tray .bell { fill: #12434f; stroke: none; margin-left: 12px; }
.copilot { margin-left: 22px; width: 30px; height: 30px; position: relative; }
.tray .copilot svg { stroke: none; }
.copilot b {
  position: absolute; left: 6px; top: 20px; width: 23px; height: 9px; border-radius: 2px; background: #f8bc1c;
  color: #221a05; font-size: 8px; line-height: 9px; text-align: center; letter-spacing: .3px;
}
```
